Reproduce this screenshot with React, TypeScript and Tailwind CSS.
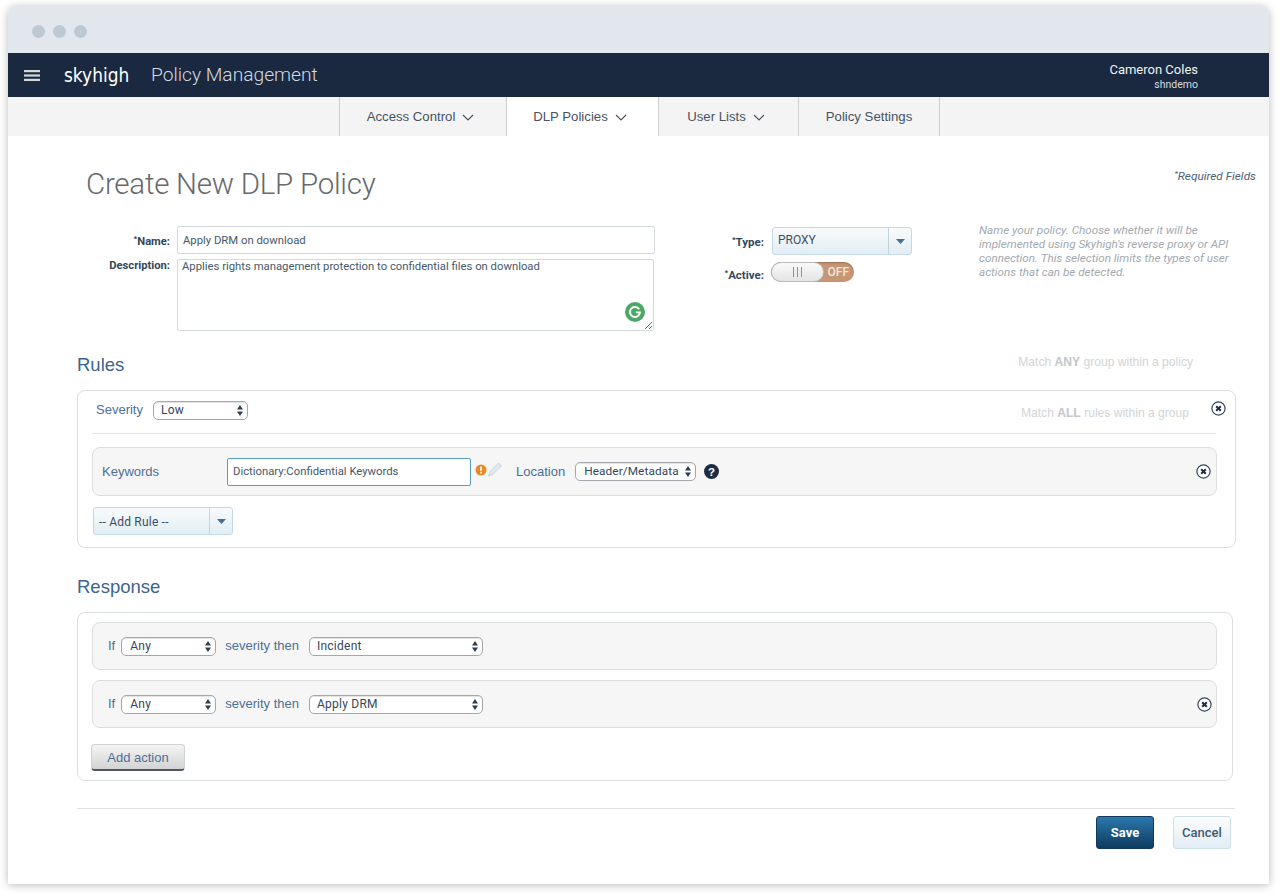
import React from "react";

const sans = "font-['Liberation_Sans',Arial,sans-serif]";
const rob = "font-['Roboto',sans-serif]";

function Chevron() {
  return (
    <svg width="12" height="7" viewBox="0 0 12 7" fill="none" stroke="#4a5560" strokeWidth="1.2" className="ml-[7px]">
      <path d="M1 1l5 5 5-5" />
    </svg>
  );
}

function Updown() {
  return (
    <svg width="6" height="11" viewBox="0 0 6 11" fill="#2c3e50" className="shrink-0">
      <path d="M3 0l3 4.4H0zM3 11L0 6.6h6z" />
    </svg>
  );
}

function Sel({ w, label, pl, size = "text-[12px] tracking-[0.25px]" }: { w: string; label: string; pl: string; size?: string }) {
  return (
    <div className={`${w} ${pl} ${size} h-[19px] flex items-center justify-between pr-[4px] bg-white border border-[#a4a8ac] rounded-[5px] shadow-[inset_0_1px_1px_rgba(0,0,0,0.12)] text-[#33475b] ${rob}`}>
      <span>{label}</span>
      <Updown />
    </div>
  );
}

function Combo({ w, label, arrow, text, lift }: { w: string; label: string; arrow: string; text: string; lift: string }) {
  return (
    <div className={`${w} h-[28px] flex rounded-[3px] border border-[#c3d9e6] bg-gradient-to-b from-[#f8fbfd] to-[#e2edf4] ${text} ${rob}`}>
      <span className={`flex-1 flex items-center pl-[5px] ${lift} text-[#3c4f61]`}>{label}</span>
      <span className={`${arrow} flex items-center justify-center border-l border-[#c3d3de]`}>
        <svg width="9" height="5" viewBox="0 0 9 5" fill="#47708f">
          <path d="M0 0h9L4.5 5z" />
        </svg>
      </span>
    </div>
  );
}

function CloseIcon() {
  return (
    <svg width="15" height="15" viewBox="0 0 15 15" className="shrink-0">
      <circle cx="7.5" cy="7.5" r="6.6" fill="#fff" stroke="#33475b" strokeWidth="1.2" />
      <path d="M5.2 5.2l4.6 4.6M9.8 5.2l-4.6 4.6" stroke="#1b2d45" strokeWidth="2" />
    </svg>
  );
}

function ActionRow({ action, close }: { action: string; close?: boolean }) {
  return (
    <div className="h-[48px] ml-[14px] mr-[15px] flex items-center pl-[15px] pr-[5px] bg-[#f6f6f6] border border-[#dcdfe1] rounded-[8px]">
      <span className={`text-[13px] text-[#4b6f96] ${sans}`}>If</span>
      <div className="ml-[6px]">
        <Sel w="w-[95px]" label="Any" pl="pl-[8px]" />
      </div>
      <span className={`ml-[9px] text-[13px] text-[#4b6f96] ${sans}`}>severity then</span>
      <div className="ml-[10px]">
        <Sel w="w-[174px]" label={action} pl="pl-[7px]" />
      </div>
      {close && (
        <div className="ml-auto mr-[-1px]">
          <CloseIcon />
        </div>
      )}
    </div>
  );
}

export default function App() {
  return (
    <div className="w-[1280px] h-[896px] bg-white pt-[6px] pl-[8px] overflow-hidden">
      <div className="w-[1261px] h-[878px] bg-white rounded-t-[8px] shadow-[0_1px_8px_rgba(0,0,0,0.28)] overflow-hidden">
        {/* window chrome */}
        <div className="h-[47px] bg-[#e2e7ed] flex items-center gap-[8px] pl-[24px] pt-[3px]">
          <span className="size-[13px] rounded-full bg-[#bcc8d2]" />
          <span className="size-[13px] rounded-full bg-[#bcc8d2]" />
          <span className="size-[13px] rounded-full bg-[#bcc8d2]" />
        </div>

        {/* top bar */}
        <div className="h-[44px] bg-[#1a2940] flex items-center pl-[16px] pr-[71px]">
          <svg width="16" height="11" viewBox="0 0 16 11" fill="#d4d8dd">
            <rect width="16" height="2.2" />
            <rect y="4.4" width="16" height="2.2" />
            <rect y="8.8" width="16" height="2.2" />
          </svg>
          <span className="ml-[24px] text-[20px] leading-none text-white font-['DejaVu_Sans',sans-serif] scale-x-[0.85] origin-left w-[68px]">skyhigh</span>
          <span className={`ml-[19px] text-[19.2px] font-light text-[#d5dae0] ${rob}`}>Policy Management</span>
          <div className={`ml-auto pt-[3px] text-right ${rob}`}>
            <div className="text-[13px] leading-[15px] text-[#f0f2f4]">Cameron Coles</div>
            <div className="text-[10.5px] leading-[15px] text-[#d5dae0]">shndemo</div>
          </div>
        </div>

        {/* tabs */}
        <div className={`h-[39px] bg-[#f4f4f4] flex pl-[331px] text-[13.2px] text-[#46535f] ${sans}`}>
          <div className="w-[167px] flex items-center justify-center pr-[5px] pt-[1px] border-l border-[#cfcfcf]">
            Access Control
            <Chevron />
          </div>
          <div className="w-[152px] flex items-center justify-center pr-[5px] pt-[1px] border-l border-[#cfcfcf] bg-white">
            DLP Policies
            <Chevron />
          </div>
          <div className="w-[140px] flex items-center justify-center pr-[5px] pt-[1px] border-l border-[#cfcfcf]">
            User Lists
            <Chevron />
          </div>
          <div className="w-[142px] flex items-center justify-center pt-[1px] border-x border-[#cfcfcf]">Policy Settings</div>
        </div>

        {/* heading */}
        <div className="h-[90px] flex justify-between pl-[78px] pr-[13px]">
          <h1 className={`mt-[28px] text-[29.5px] leading-[40px] font-light text-[#66696d] tracking-[-0.25px] ${rob}`}>Create New DLP Policy</h1>
          <div className={`mt-[32px] text-[11.8px] italic leading-[16px] text-[#4e6074] ${rob}`}>
            <sup className="text-[8px]">*</sup>Required Fields
          </div>
        </div>

        {/* name form */}
        <div className={`flex h-[110px] ${rob}`}>
          <div className="w-[162px] shrink-0 text-right text-[11.2px] font-bold text-[#33475b]">
            <div className="h-[28px] pt-[8px] leading-[16px]">
              <sup className="text-[8px]">*</sup>Name:
            </div>
            <div className="mt-[5px] leading-[14px]">Description:</div>
          </div>
          <div className="ml-[7px] w-[478px]">
            <input
              readOnly
              value="Apply DRM on download"
              className="block w-[478px] h-[28px] pl-[5px] text-[11.3px] text-[#46586a] border border-[#d3d9dd] rounded-[2px] outline-none"
            />
            <div className="relative mt-[5px] w-[477px] h-[72px]">
              <textarea
                readOnly
                value="Applies rights management protection to confidential files on download"
                className="block w-full h-full pl-[4px] text-[11.3px] leading-[14px] text-[#46586a] border border-[#d3d9dd] rounded-[2px] outline-none"
              />
              <div className="absolute right-[9px] bottom-[9px] size-[20px] rounded-full bg-[#4ca864] flex items-center justify-center">
                <svg width="12" height="12" viewBox="0 0 12 12" fill="none" stroke="#fff" strokeWidth="1.9">
                  <path d="M10.2 3.2A5 5 0 1 0 11 6.4H6.8" />
                </svg>
              </div>
            </div>
          </div>

          <div className="ml-[73px] w-[36px] shrink-0 text-right text-[11.5px] font-bold text-[#33475b] flex flex-col items-end">
            <div className="h-[28px] pt-[8px] leading-[16px] whitespace-nowrap">
              <sup className="text-[8px]">*</sup>Type:
            </div>
            <div className="mt-[13px] leading-[16px] whitespace-nowrap">
              <sup className="text-[8px]">*</sup>Active:
            </div>
          </div>
          <div className="ml-[8px] w-[140px]">
            <div className="mt-[1px]">
              <Combo w="w-[140px]" label="PROXY" arrow="w-[23px]" text="text-[12px]" lift="pb-[2px]" />
            </div>
            <div className="mt-[7px] ml-[-1px] w-[83px] h-[20px] relative rounded-full bg-[#c79674] shadow-[inset_0_1px_2px_rgba(0,0,0,0.25)]">
              <span className="absolute right-[5px] top-[3px] text-[12px] leading-[14px] font-medium text-[#f3e7de]">OFF</span>
              <div className="absolute left-0 top-0 w-[53px] h-[20px] rounded-full bg-gradient-to-b from-[#fafafa] to-[#e4e4e4] border border-[#bdbdbd] flex items-center justify-center gap-[3px]">
                <span className="w-px h-[10px] bg-[#8f8f8f]" />
                <span className="w-px h-[10px] bg-[#8f8f8f]" />
                <span className="w-px h-[10px] bg-[#8f8f8f]" />
              </div>
            </div>
          </div>

          <p className="ml-[67px] mt-[-3px] w-[258px] h-fit text-[11.7px] italic leading-[14px] text-[#a2a9b0]">
            Name your policy. Choose whether it will be implemented using Skyhigh's reverse proxy or API connection. This selection limits the types of user actions that can be detected.
          </p>
        </div>

        {/* rules */}
        <div className={`h-[54px] flex items-start justify-between pl-[69px] pr-[76px] ${sans}`}>
          <h2 className="text-[18.5px] leading-[24px] mt-[17px] text-[#3d648c]">Rules</h2>
          <div className="mt-[18px] text-[12.1px] leading-[16px] text-[#d2d4d6]">
            Match <b className="text-[#c3c6c9]">ANY</b> group within a policy
          </div>
        </div>

        <div className={`ml-[69px] w-[1159px] h-[158px] border border-[#dcdfe1] rounded-[8px] ${sans}`}>
          <div className="h-[43px] ml-[14px] mr-[19px] border-b border-[#dfe5e8] flex items-center pb-[4px]">
            <span className="ml-[4px] text-[13px] text-[#4b6f96]">Severity</span>
            <div className="ml-[10px]">
              <Sel w="w-[95px]" label="Low" pl="pl-[7px]" />
            </div>
            <span className="ml-auto mr-[22px] mt-[7px] text-[12.1px] text-[#d2d4d6]">
              Match <b className="text-[#c3c6c9]">ALL</b> rules within a group
            </span>
            <div className="mr-[-10px] mt-[-3px]">
              <CloseIcon />
            </div>
          </div>

          <div className="mt-[13px] ml-[14px] mr-[18px] h-[49px] flex items-center pl-[9px] pr-[5px] bg-[#f6f6f6] border border-[#dcdfe1] rounded-[8px]">
            <span className="w-[125px] text-[13px] text-[#4b6f96]">Keywords</span>
            <input
              readOnly
              value="Dictionary:Confidential Keywords"
              className={`w-[244px] h-[28px] pl-[5px] pb-[1px] bg-white border border-[#5a9cc5] rounded-[2px] text-[11.3px] text-[#46586a] outline-none ${rob}`}
            />
            <svg width="28" height="16" viewBox="0 0 28 16" className="ml-[4px] mt-[-3px] shrink-0">
              <circle cx="6" cy="8" r="5.5" fill="#e88a22" />
              <rect x="5.2" y="4.4" width="1.6" height="4.4" fill="#fff" />
              <rect x="5.2" y="9.8" width="1.6" height="1.6" fill="#fff" />
              <path d="M13.5 14l1.5-4.5 8.5-8.5 3 2.8-8.5 8.5z" fill="#e2e8ed" stroke="#c5ced5" strokeWidth="0.8" />
            </svg>
            <span className="ml-[13px] text-[13px] text-[#4b6f96]">Location</span>
            <div className="ml-[10px]">
              <Sel w="w-[121px]" label="Header/Metadata" pl="pl-[8px]" size="text-[11.8px] tracking-[0.1px]" />
            </div>
            <svg width="15" height="15" viewBox="0 0 15 15" className="ml-[8px] shrink-0">
              <circle cx="7.5" cy="7.5" r="7.5" fill="#1b2d45" />
              <text x="7.5" y="11.6" textAnchor="middle" fontSize="11.5" fontWeight="700" fill="#fff" fontFamily="Liberation Sans">?</text>
            </svg>
            <div className="ml-auto">
              <CloseIcon />
            </div>
          </div>

          <div className="mt-[11px] ml-[15px]">
            <Combo w="w-[140px]" label="-- Add Rule --" arrow="w-[23px]" text="text-[12px] tracking-[0.2px]" lift="pt-[1px]" />
          </div>
        </div>

        {/* response */}
        <h2 className={`ml-[69px] mt-[27px] h-[37px] text-[18.5px] leading-[24px] text-[#3d648c] ${sans}`}>Response</h2>

        <div className={`ml-[69px] w-[1156px] h-[169px] pt-[9px] border border-[#dcdfe1] rounded-[8px] ${sans}`}>
          <ActionRow action="Incident" />
          <div className="mt-[10px]">
            <ActionRow action="Apply DRM" close />
          </div>
          <button className="block mt-[16px] ml-[13px] w-[94px] h-[27px] pt-[2px] text-center text-[13px] text-[#4b6f96] rounded-[4px] border border-[#d0d2d4] border-b-2 border-b-[#55585b] bg-gradient-to-b from-[#f5f5f5] to-[#d2d3d4]">
            Add action
          </button>
        </div>

        {/* footer */}
        <div className="ml-[69px] mt-[27px] w-[1158px] border-t border-[#dfe3e6] flex justify-end gap-[19px] pt-[7px] pr-[4px]">
          <button className={`w-[58px] h-[33px] text-[13px] font-bold text-white rounded-[3px] border border-[#123a5c] bg-gradient-to-b from-[#2c78ad] to-[#0e3c60] ${rob}`}>Save</button>
          <button className={`w-[58px] h-[33px] text-[13px] font-medium text-[#3c5a75] rounded-[3px] border border-[#cfdfe8] bg-gradient-to-b from-[#fbfdfe] to-[#e2edf4] ${rob}`}>Cancel</button>
        </div>
      </div>
    </div>
  );
}
